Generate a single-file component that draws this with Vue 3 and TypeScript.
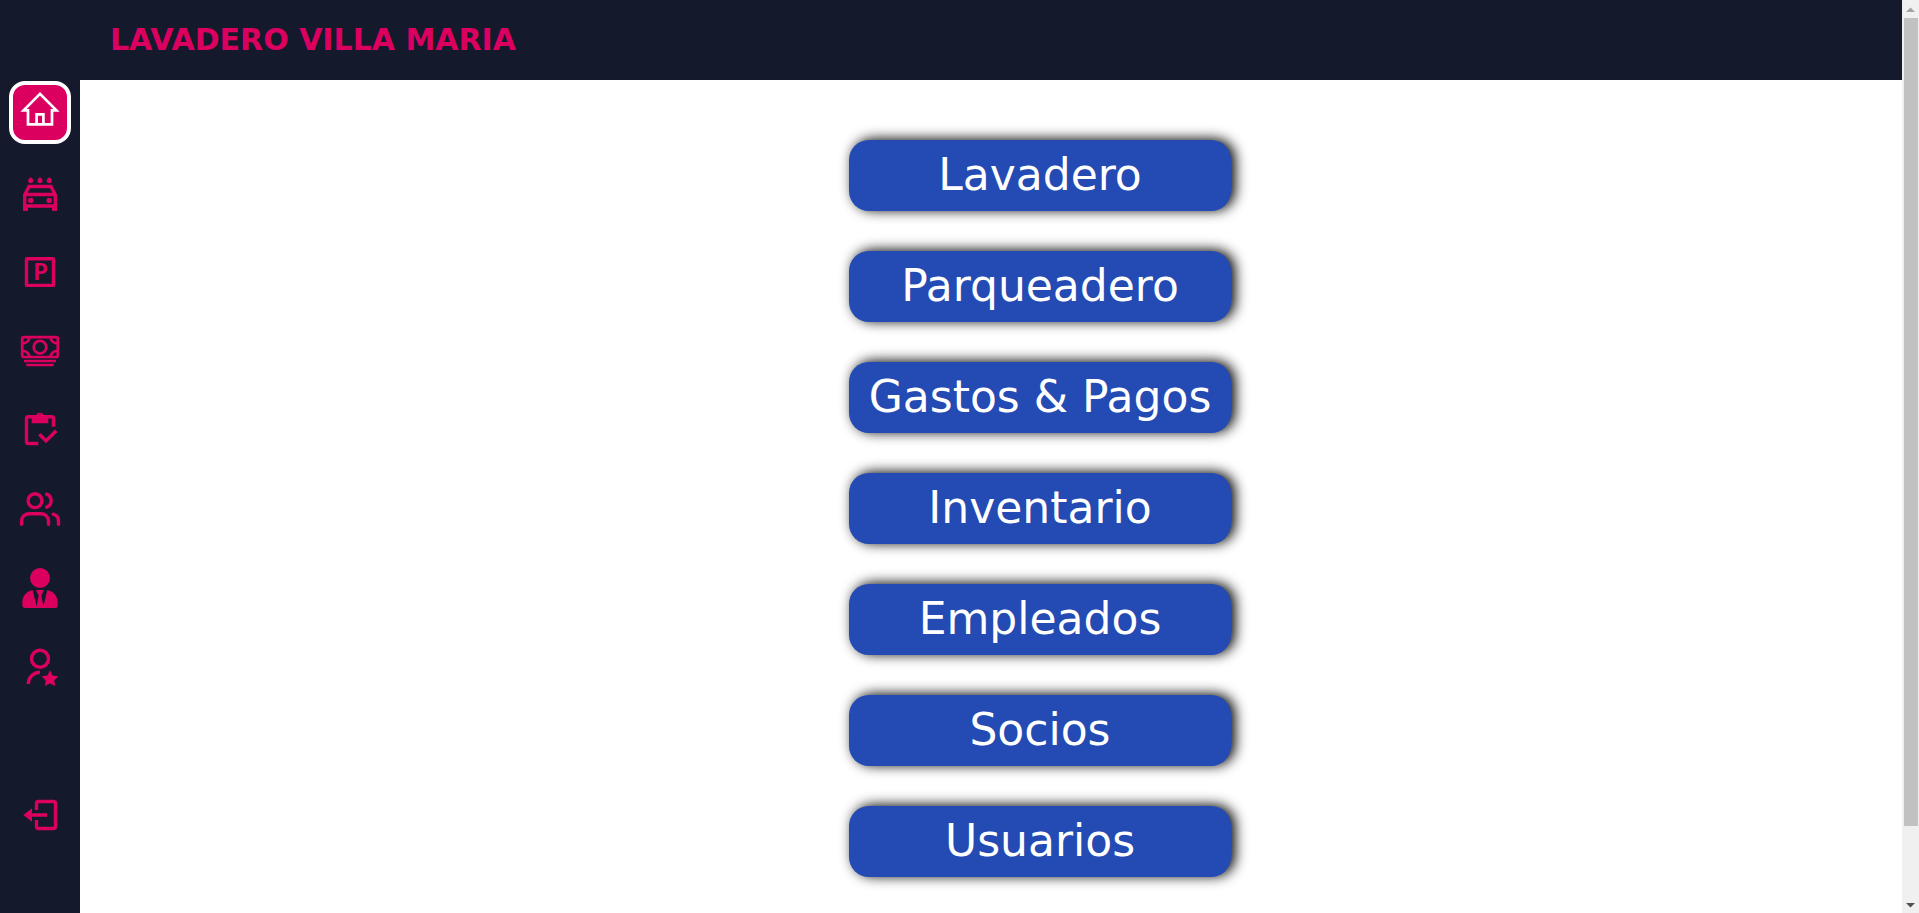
<script setup lang="ts">
import { ref } from 'vue'

interface Section {
  id: string
  label: string
}

const sections: Section[] = [
  { id: 'lavadero', label: 'Lavadero' },
  { id: 'parqueadero', label: 'Parqueadero' },
  { id: 'gastos', label: 'Gastos & Pagos' },
  { id: 'inventario', label: 'Inventario' },
  { id: 'empleados', label: 'Empleados' },
  { id: 'socios', label: 'Socios' },
  { id: 'usuarios', label: 'Usuarios' },
]

const active = ref<string>('inicio')
</script>

<template>
  <div class="window">
    <div class="app">
      <header class="topbar">
        <h1 class="brand">LAVADERO VILLA MARIA</h1>
      </header>

      <nav class="sidebar" aria-label="Principal">
        <a class="item home" :class="{ active: active === 'inicio' }" href="#inicio" aria-label="Inicio" @click="active = 'inicio'">
          <svg viewBox="0 0 40 40" class="icon">
            <path class="line thin" d="M20 2.9 3.6 19.4H8v14h24v-14h4.4zM16.6 33.4v-10h6.8v10" />
          </svg>
        </a>
        <a class="item" href="#lavadero" aria-label="Lavadero">
          <svg viewBox="0 0 40 40" class="icon">
            <path class="solid" d="M10.700 4c1.600 1.800 2.600 2.500 2.600 3.600a2.600 2.600 0 0 1-5.200 0c0-1.100 1-1.800 2.600-3.600zM20 4c1.600 1.800 2.600 2.500 2.600 3.600a2.600 2.600 0 0 1-5.200 0c0-1.100 1-1.800 2.600-3.600zM29.300 4c1.600 1.800 2.600 2.500 2.600 3.600a2.600 2.600 0 0 1-5.200 0c0-1.100 1-1.800 2.600-3.600z" />
            <path class="line" d="M4.700 35V22L9 13.500h22L35.300 22v13M4.500 21.500h31M4.500 33h31" />
            <path class="solid" d="M3 32h5v5q0 1-1 1H4q-1 0-1-1zM32 32h5v5q0 1-1 1h-3q-1 0-1-1z" />
            <circle class="solid" cx="10.800" cy="27.500" r="2.700" />
            <circle class="solid" cx="29.200" cy="27.500" r="2.700" />
          </svg>
        </a>
        <a class="item" href="#parqueadero" aria-label="Parqueadero">
          <svg viewBox="0 0 40 40" class="icon">
            <rect class="line" x="6.500" y="6.700" width="27" height="26.700" rx="0.500" />
            <text class="letter" x="20.500" y="28" text-anchor="middle">P</text>
          </svg>
        </a>
        <a class="item" href="#gastos" aria-label="Gastos y pagos">
          <svg viewBox="0 0 40 40" class="icon">
            <rect class="line thin" x="2.200" y="6.200" width="35.600" height="19.800" rx="1.500" />
            <circle class="line thin" cx="20" cy="16.200" r="6.300" />
            <path class="line thin" d="M9.500 6.500a7 7 0 0 1-7 6M30.500 6.500a7 7 0 0 0 7 6M9.500 25.800a7 7 0 0 0-7-6M30.500 25.800a7 7 0 0 1 7-6M4 30h32M6.300 34h27.400" />
          </svg>
        </a>
        <a class="item" href="#inventario" aria-label="Inventario">
          <svg viewBox="0 0 40 40" class="icon">
            <path class="line" d="M33.500 16.700V8.500q0-1.700-1.700-1.700H8.200q-1.700 0-1.700 1.700v23.300q0 1.700 1.700 1.700h10.100M19.400 24.200l6.600 6.700L36.200 20.700" />
            <path class="solid" fill-rule="evenodd" d="M11.700 6h4.300a4.100 4.100 0 0 1 8 0h4.300v7.300H11.700zM20 4.600a1.800 1.800 0 1 0 0 3.600 1.800 1.800 0 0 0 0-3.600z" />
          </svg>
        </a>
        <a class="item" href="#empleados" aria-label="Empleados">
          <svg viewBox="0 0 40 40" class="icon">
            <g class="line round">
              <circle cx="15" cy="11.700" r="6.900" />
              <path d="M26.700 5.200a7 7 0 0 1 0 13M1.600 35.200V32a7.200 7.200 0 0 1 7.200-7.200h12.500a7.200 7.200 0 0 1 7.200 7.200v3.200M33.300 25.200a7.200 7.200 0 0 1 5.200 6.800v3.200" />
            </g>
          </svg>
        </a>
        <a class="item" href="#socios" aria-label="Socios">
          <svg viewBox="0 0 40 40" class="icon">
            <circle class="solid" cx="20" cy="10" r="10" />
            <path class="solid" d="M12.700 22.300 16.600 38.500 18.600 27.500 16 22H24L21.400 27.500 23.400 38.500 27.300 22.300C33.500 23 37.700 28 37.700 34.500V37q0 3-3 3H5.300q-3 0-3-3v-2.500C2.300 28 6.500 23 12.700 22.300z" />
          </svg>
        </a>
        <a class="item" href="#usuarios" aria-label="Usuarios">
          <svg viewBox="0 0 40 40" class="icon">
            <circle class="line" cx="20" cy="11.700" r="8.500" />
            <path class="line" d="M20 25.200A11.700 11.700 0 0 0 8.300 37" />
            <path class="solid" d="M30 23.200l2.600 5.300 5.800.8-4.200 4.100 1 5.700-5.200-2.700-5.200 2.700 1-5.700-4.200-4.100 5.800-.8z" />
          </svg>
        </a>
        <a class="item logout" href="#salir" aria-label="Salir">
          <svg viewBox="0 0 40 40" class="icon">
            <path class="line" d="M16.500 15V8.500q0-2 2-2h15q2 0 2 2v23q0 2-2 2h-15q-2 0-2-2V25M11 20h16" />
            <path class="solid" d="M3.300 20 12 13.300v13.400z" />
          </svg>
        </a>
      </nav>

      <main class="content">
        <button v-for="s in sections" :key="s.id" type="button" class="section" @click="active = s.id">
          {{ s.label }}
        </button>
      </main>
    </div>

    <div class="scrollbar" aria-hidden="true">
      <svg class="arrow up" viewBox="0 0 17 18"><path d="M4 12h9L8.500 7.500z" /></svg>
      <div class="track"><div class="thumb"></div></div>
      <svg class="arrow down" viewBox="0 0 17 17"><path d="M4 7h9l-4.500 4.500z" /></svg>
    </div>
  </div>
</template>

<style>
body {
  margin: 0;
}
</style>

<style scoped>
.window {
  display: grid;
  grid-template-columns: minmax(0, 1fr) 17px;
  height: 100vh;
  overflow: hidden;
  font-family: 'DejaVu Sans', Verdana, sans-serif;
}

.app {
  display: grid;
  grid-template: 80px minmax(0, 1fr) / 80px minmax(0, 1fr);
  min-height: 0;
  background: #fff;
}

.topbar {
  grid-column: 1 / -1;
  display: flex;
  align-items: center;
  padding: 0 0 2px 110px;
  background: #15192c;
}

.brand {
  margin: 0;
  color: #db0060;
  font-size: 30px;
  font-weight: bold;
}

.sidebar {
  display: flex;
  flex-direction: column;
  align-items: center;
  gap: 19px;
  padding-top: 1px;
  background: #15192c;
}

.item {
  box-sizing: border-box;
  display: flex;
  flex: none;
  align-items: center;
  justify-content: center;
  width: 62px;
  height: 60px;
  color: #db0060;
}

.home {
  height: 63px;
  padding-bottom: 3px;
}

.active {
  border: 4px solid #fff;
  border-radius: 16px;
  background: #db0060;
  color: #fff;
}

.logout {
  margin-top: 69px;
}

.icon {
  flex: none;
  width: 40px;
  height: 40px;
  overflow: visible;
}

.line {
  fill: none;
  stroke: currentColor;
  stroke-width: 3.4;
}

.thin {
  stroke-width: 2.7;
}

.round {
  stroke-linecap: round;
}

.solid {
  fill: currentColor;
}

.letter {
  fill: currentColor;
  font: 900 22px Lato, sans-serif;
}

.content {
  display: flex;
  flex-direction: column;
  align-items: center;
  gap: 40px;
  padding: 60px 0 40px 98px;
  overflow: hidden;
}

.section {
  flex: none;
  min-width: 382px;
  padding: 9px 20px 11px;
  border: 0;
  border-radius: 20px;
  background: #244ab3;
  box-shadow: 4px -1px 13px #000;
  color: #fff;
  font: inherit;
  font-size: 44px;
  cursor: pointer;
}

.scrollbar {
  display: flex;
  flex-direction: column;
  background: #f0f0f0;
}

.arrow {
  flex: none;
  width: 17px;
}

.up {
  height: 18px;
  fill: #a3a3a3;
}

.down {
  height: 17px;
  fill: #505050;
}

.track {
  flex: 1;
  padding: 0 1px 0 2px;
}

.thumb {
  height: 92%;
  background: #c1c1c1;
}
</style>
